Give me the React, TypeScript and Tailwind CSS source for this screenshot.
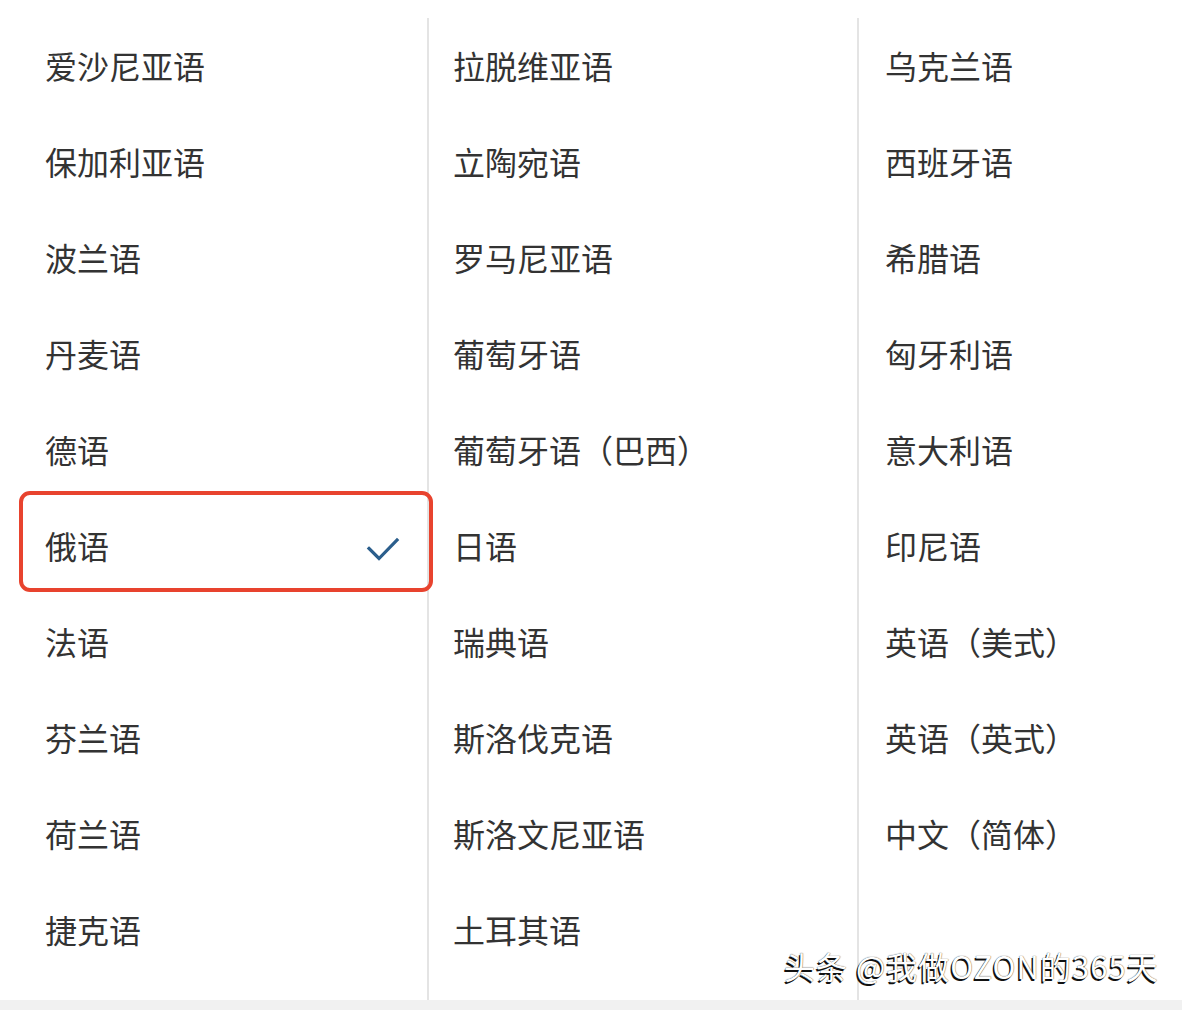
const col1 = ["爱沙尼亚语", "保加利亚语", "波兰语", "丹麦语", "德语", "俄语", "法语", "芬兰语", "荷兰语", "捷克语"]
const col2 = ["拉脱维亚语", "立陶宛语", "罗马尼亚语", "葡萄牙语", "葡萄牙语（巴西）", "日语", "瑞典语", "斯洛伐克语", "斯洛文尼亚语", "土耳其语"]
const col3 = ["乌克兰语", "西班牙语", "希腊语", "匈牙利语", "意大利语", "印尼语", "英语（美式）", "英语（英式）", "中文（简体）"]

const selected = "俄语"

function Row({ label }: { label: string }) {
  const isSelected = label === selected
  return (
    <div className="relative h-[96px] flex items-center justify-between">
      <span className="mb-[4px]">{label}</span>
      {isSelected && (
        <>
          <svg className="w-[34px] h-[26px] mr-[27px] mt-[4px]" viewBox="0 0 34 26" fill="none">
            <path d="M3 12.5l10 10L31 4" stroke="#2b5e8c" strokeWidth={3.2} strokeLinecap="square" />
          </svg>
          <div className="absolute left-[-26px] right-[-6px] top-[-8px] h-[101px] border-[4px] border-[#e8432e] rounded-[11px] pointer-events-none" />
        </>
      )}
    </div>
  )
}

export default function App() {
  return (
    <div
      className="relative w-[1182px] h-[1010px] bg-[#f1f1f1] text-[32px] text-[#333333] overflow-hidden"
      style={{ fontFamily: '"Noto Sans CJK SC", "Noto Sans", sans-serif' }}
    >
      <div className="h-[1000px] bg-white flex pt-[18px]">
        <div className="w-[429px] border-r-2 border-[#e4e4e4] pl-[45px] pt-[1px]">
          {col1.map((l) => (
            <Row key={l} label={l} />
          ))}
        </div>
        <div className="w-[430px] border-r-2 border-[#e4e4e4] pl-[24px] pt-[1px]">
          {col2.map((l) => (
            <Row key={l} label={l} />
          ))}
        </div>
        <div className="flex-1 pl-[26px] pt-[1px]">
          {col3.map((l) => (
            <Row key={l} label={l} />
          ))}
        </div>
      </div>

      <div className="absolute left-[784px] top-[944px] text-[31px] leading-[44px] text-white tracking-[1px] [text-shadow:-1.5px_1.5px_0_#111,0_0_1px_#111]">
        头条 @我做OZON的365天
      </div>
    </div>
  )
}
